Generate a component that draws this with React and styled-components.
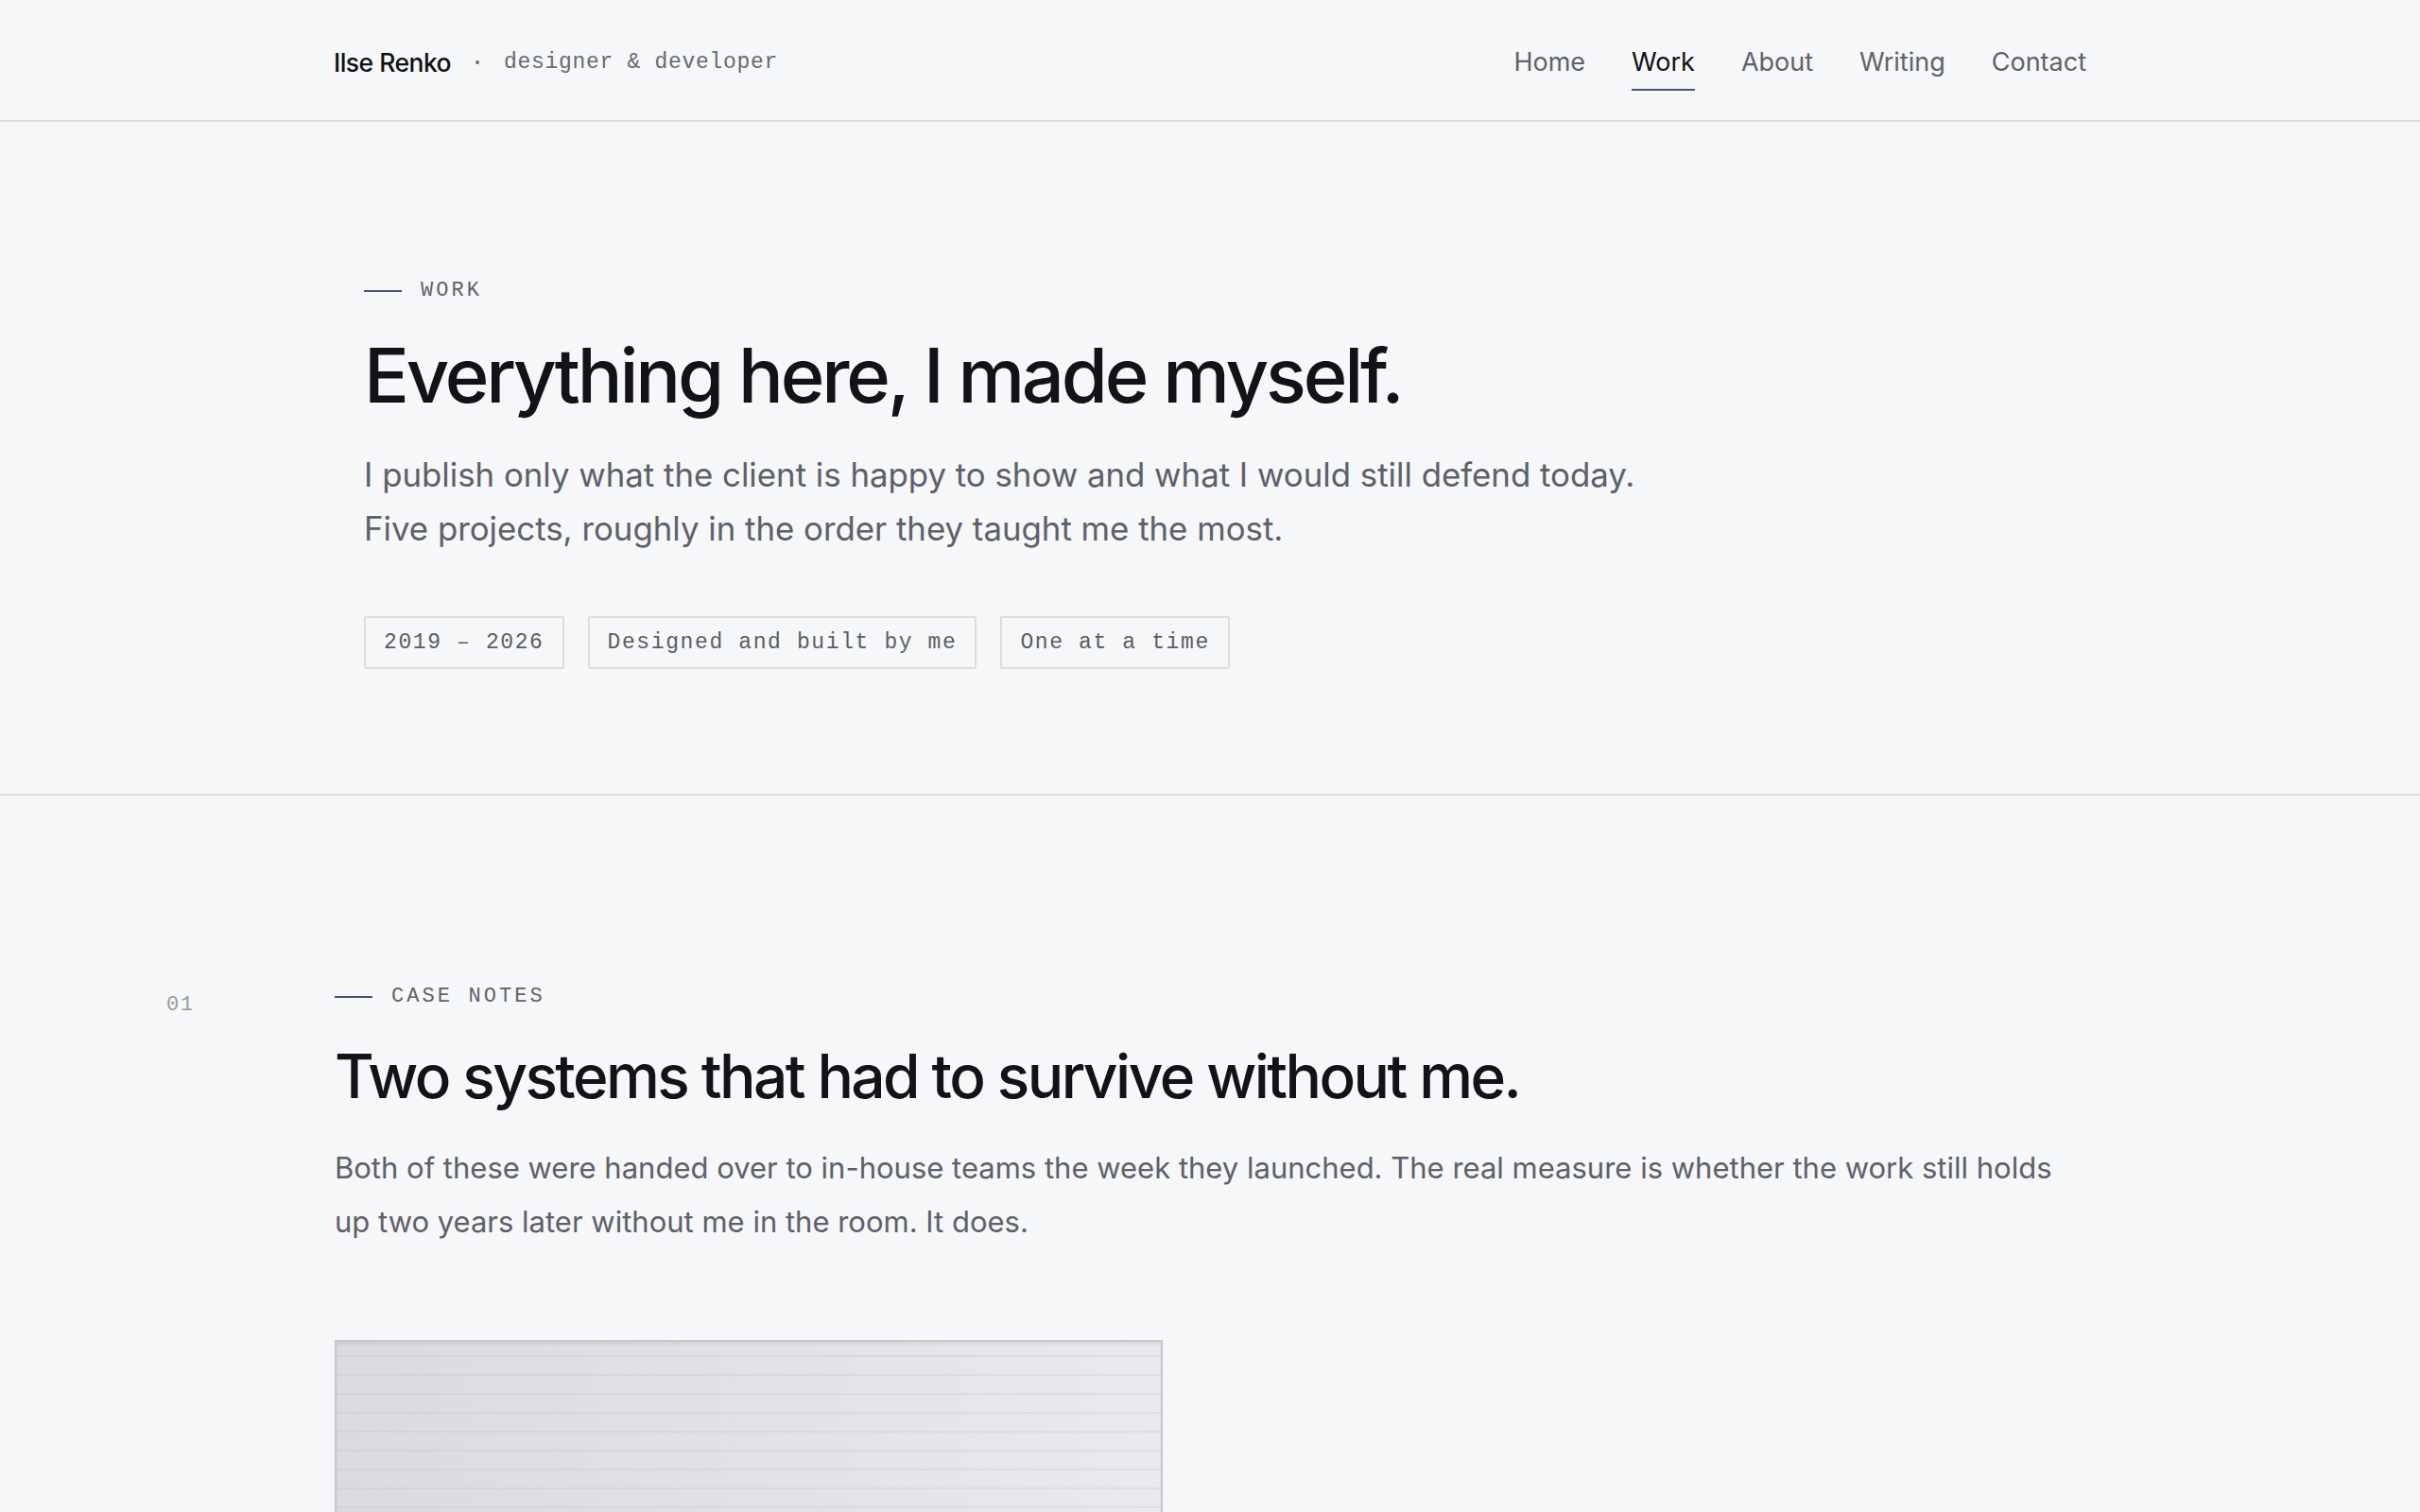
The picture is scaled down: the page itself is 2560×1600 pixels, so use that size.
import React from 'react';
import styled, { createGlobalStyle } from 'styled-components';

const GlobalStyle = createGlobalStyle`
  html, body {
    margin: 0;
    padding: 0;
    background: #f6f7f9;
  }
  body {
    font-family: Inter, "Noto Sans", sans-serif;
    color: #111318;
    overflow: hidden;
  }
`;

const mono = `"Liberation Mono", "DejaVu Sans Mono", monospace`;

const Page = styled.div`
  min-height: 1600px;
  background: #f6f7f9;
`;

const Header = styled.header`
  height: 127px;
  border-bottom: 2px solid #dcdde1;
`;

const HeaderInner = styled.div`
  max-width: 1854px;
  height: 100%;
  margin: 0 auto;
  padding-top: 4px;
  box-sizing: border-box;
  display: flex;
  align-items: center;
  justify-content: space-between;
`;

const Brand = styled.div`
  display: flex;
  align-items: center;
  gap: 26px;
`;

const Name = styled.span`
  font-size: 26.5px;
  font-weight: 500;
  letter-spacing: -0.02em;
  color: #0f1115;
`;

const Dot = styled.span`
  width: 4px;
  height: 4px;
  border-radius: 50%;
  background: #6b6e77;
`;

const Role = styled.span`
  font-family: ${mono};
  font-size: 23px;
  letter-spacing: 0.03em;
  color: #676a73;
`;

const Nav = styled.nav`
  display: flex;
  gap: 49px;
`;

const NavLink = styled.a`
  position: relative;
  font-size: 27px;
  color: ${(p) => (p.$active ? '#0f1115' : '#5f626b')};
  text-decoration: none;
  line-height: 1;

  &::after {
    content: '';
    display: ${(p) => (p.$active ? 'block' : 'none')};
    position: absolute;
    left: 0;
    right: 0;
    bottom: -17px;
    height: 2px;
    background: #4a5373;
  }
`;

const Hero = styled.section`
  border-bottom: 2px solid #dcdde1;
  padding: 166px 0 132px;
`;

const HeroInner = styled.div`
  max-width: 1790px;
  margin: 0 auto;
`;

const Eyebrow = styled.div`
  display: flex;
  align-items: center;
  gap: 20px;
  font-family: ${mono};
  font-size: 22px;
  letter-spacing: 0.14em;
  text-transform: uppercase;
  color: #5f626b;

  &::before {
    content: '';
    width: 40px;
    height: 2px;
    background: #4a5373;
  }
`;

const HeroTitle = styled.h1`
  margin: 34px 0 0;
  font-size: 79.5px;
  font-weight: 500;
  letter-spacing: -0.04em;
  line-height: 1.1;
  color: #111318;
`;

const Lead = styled.p`
  margin: ${(p) => p.$top || '33px'} 0 0;
  max-width: ${(p) => p.$max || '1360px'};
  font-size: ${(p) => p.$size || '34.8px'};
  line-height: 57px;
  color: #5d606b;
`;

const Tags = styled.div`
  display: flex;
  gap: 25px;
  margin-top: 64px;
`;

const Tag = styled.span`
  display: inline-flex;
  align-items: center;
  height: 52px;
  padding: 0 19px;
  border: 2px solid #dcdde1;
  border-radius: 2px;
  font-family: ${mono};
  font-size: 23px;
  letter-spacing: 0.07em;
  color: #5a5d66;
`;

const Case = styled.section`
  display: grid;
  grid-template-columns: 178px 1fr;
  padding: 200px 0 0 176px;
`;

const Index = styled.div`
  padding-top: 9px;
  font-family: ${mono};
  font-size: 22px;
  letter-spacing: 0.08em;
  color: #979aa1;
`;

const CaseBody = styled.div`
  max-width: 1853px;
`;

const CaseTitle = styled.h2`
  margin: 34px 0 0;
  font-size: 64px;
  font-weight: 500;
  letter-spacing: -0.04em;
  line-height: 1.2;
  color: #111318;
`;

const Shot = styled.div`
  margin-top: 97px;
  width: 872px;
  height: 300px;
  border: 2px solid #c6c8ce;
  border-bottom: none;
  background:
    repeating-linear-gradient(
      180deg,
      transparent 0,
      transparent 14px,
      rgba(190, 193, 201, 0.28) 14px,
      rgba(190, 193, 201, 0.28) 16px,
      transparent 16px,
      transparent 20px
    ),
    linear-gradient(90deg, #d9dbe0 0%, #e1e2e7 50%, #e9eaee 100%);
  box-shadow: inset 0 3px 3px rgba(0, 0, 0, 0.06);
`;

const links = ['Home', 'Work', 'About', 'Writing', 'Contact'];

export default function App() {
  return (
    <Page>
      <GlobalStyle />
      <Header>
        <HeaderInner>
          <Brand>
            <Name>Ilse Renko</Name>
            <Dot />
            <Role>designer &amp; developer</Role>
          </Brand>
          <Nav>
            {links.map((l) => (
              <NavLink key={l} href="#" $active={l === 'Work'}>
                {l}
              </NavLink>
            ))}
          </Nav>
        </HeaderInner>
      </Header>

      <Hero>
        <HeroInner>
          <Eyebrow>Work</Eyebrow>
          <HeroTitle>Everything here, I made myself.</HeroTitle>
          <Lead>
            I publish only what the client is happy to show and what I would still defend today.
            Five projects, roughly in the order they taught me the most.
          </Lead>
          <Tags>
            <Tag>2019 – 2026</Tag>
            <Tag>Designed and built by me</Tag>
            <Tag>One at a time</Tag>
          </Tags>
        </HeroInner>
      </Hero>

      <Case>
        <Index>01</Index>
        <CaseBody>
          <Eyebrow>Case notes</Eyebrow>
          <CaseTitle>Two systems that had to survive without me.</CaseTitle>
          <Lead $size="31px" $max="1853px" $top="29px">
            Both of these were handed over to in-house teams the week they launched. The real
            measure is whether the work still holds up two years later without me in the room. It
            does.
          </Lead>
          <Shot />
        </CaseBody>
      </Case>
    </Page>
  );
}
